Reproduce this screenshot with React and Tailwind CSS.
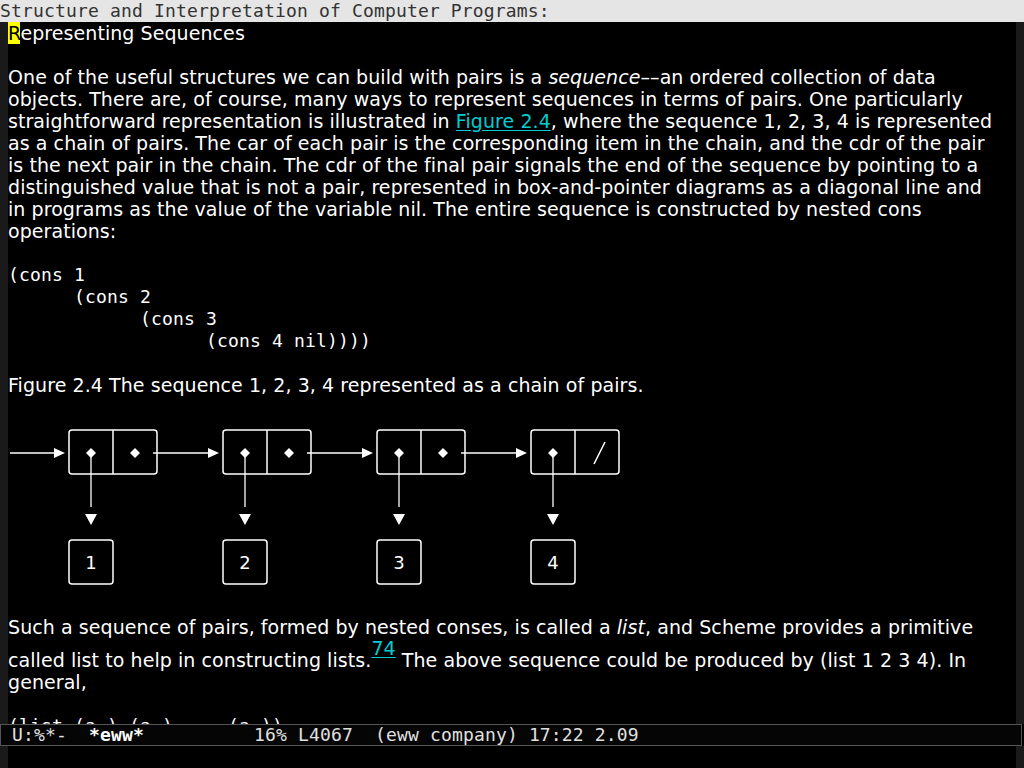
import React from "react";

const sans = { fontFamily: '"DejaVu Sans", "Liberation Sans", sans-serif' };

function Pair({ x, last }) {
  return (
    <g>
      <rect x={x} y={33} width={88} height={44} rx={3} fill="none" stroke="#fff" strokeWidth={1.5} />
      <line x1={x + 44} y1={33} x2={x + 44} y2={77} stroke="#fff" strokeWidth={1.5} />
      <polygon points={`${x + 22},51 ${x + 27},56 ${x + 22},61 ${x + 17},56`} fill="#fff" />
      {last ? (
        <line x1={x + 63} y1={67} x2={x + 74} y2={45} stroke="#fff" strokeWidth={1.5} />
      ) : (
        <polygon points={`${x + 66},51 ${x + 71},56 ${x + 66},61 ${x + 61},56`} fill="#fff" />
      )}
      <line x1={x + 22} y1={56} x2={x + 22} y2={110} stroke="#fff" strokeWidth={1.3} />
      <polygon points={`${x + 16},117 ${x + 28},117 ${x + 22},128`} fill="#fff" />
      <rect x={x} y={143} width={44} height={44} rx={3} fill="none" stroke="#fff" strokeWidth={1.5} />
    </g>
  );
}

function Arrow({ x1, x2 }) {
  return (
    <g>
      <line x1={x1} y1={56} x2={x2 - 10} y2={56} stroke="#fff" strokeWidth={1.3} />
      <polygon points={`${x2 - 11},51 ${x2},56 ${x2 - 11},61`} fill="#fff" />
    </g>
  );
}

function Diagram() {
  const xs = [60, 214, 368, 522];
  return (
    <svg width="700" height="220" viewBox="-1 -1 700 220" className="block">
      <Arrow x1={1} x2={56} />
      {xs.slice(0, 3).map((x) => (
        <Arrow key={x} x1={x + 84} x2={x + 150} />
      ))}
      {xs.map((x, i) => (
        <Pair key={x} x={x} last={i === 3} />
      ))}
      {xs.map((x, i) => (
        <text
          key={"t" + x}
          x={x + 22}
          y={172}
          textAnchor="middle"
          fill="#fff"
          fontSize="18"
          fontFamily='"DejaVu Sans", sans-serif'
        >
          {i + 1}
        </text>
      ))}
    </svg>
  );
}

const L = ({ children }) => <div className="h-[22px] leading-[22px] whitespace-pre">{children}</div>;
const Mono = ({ children }) => (
  <div className="h-[22px] leading-[22px] whitespace-pre font-['DejaVu_Sans_Mono',monospace] text-[18px] tracking-[0.16px]">
    {children}
  </div>
);
const Link = ({ children }) => <span className="text-[#00cdd0] underline underline-offset-2">{children}</span>;

export default function App() {
  return (
    <div className="w-[1024px] h-[768px] bg-black flex flex-col overflow-hidden">
      <div className="h-[22px] shrink-0 bg-[#e5e5e5] text-[#333333] leading-[22px] text-[18px] tracking-[0.16px] whitespace-pre font-['DejaVu_Sans_Mono',monospace]">
        Structure and Interpretation of Computer Programs:
      </div>
      <div className="flex flex-1 min-h-0">
        <div className="w-[8px] bg-[#1a1a1a] shrink-0" />
        <div className="flex-1 min-w-0 overflow-hidden text-white text-[19px] tracking-[0.07px]" style={sans}>
          <L>
            <span className="bg-[#ffff00] text-black">R</span>epresenting Sequences
          </L>
          <L> </L>
          <L>
            One of the useful structures we can build with pairs is a <i>sequence</i>––an ordered collection of data
          </L>
          <L>objects. There are, of course, many ways to represent sequences in terms of pairs. One particularly</L>
          <L>
            straightforward representation is illustrated in <Link>Figure 2.4</Link>, where the sequence 1, 2, 3, 4 is represented
          </L>
          <L>as a chain of pairs. The car of each pair is the corresponding item in the chain, and the cdr of the pair</L>
          <L>is the next pair in the chain. The cdr of the final pair signals the end of the sequence by pointing to a</L>
          <L>distinguished value that is not a pair, represented in box-and-pointer diagrams as a diagonal line and</L>
          <L>in programs as the value of the variable nil. The entire sequence is constructed by nested cons</L>
          <L>operations:</L>
          <L> </L>
          <Mono>(cons 1</Mono>
          <Mono>      (cons 2</Mono>
          <Mono>            (cons 3</Mono>
          <Mono>                  (cons 4 nil))))</Mono>
          <L> </L>
          <L>Figure 2.4 The sequence 1, 2, 3, 4 represented as a chain of pairs.</L>
          <Diagram />
          <L>
            Such a sequence of pairs, formed by nested conses, is called a <i>list</i>, and Scheme provides a primitive
          </L>
          <div className="h-[33px] pt-[11px] leading-[22px] whitespace-pre">
            called list to help in constructing lists.
            <span className="relative top-[-12px] text-[#00cdd0] underline underline-offset-2">74</span> The above sequence could be produced by (list 1 2 3 4). In
          </div>
          <L>general,</L>
          <L> </L>
          <Mono>(list (a₁) (a₂) ... (aₙ))</Mono>
        </div>
        <div className="w-[8px] bg-[#1a1a1a] shrink-0" />
      </div>
      <div className="h-[22px] w-[1022px] shrink-0 border border-[#555555] bg-[#050505] text-[#e0e0e0] leading-[20px] text-[18px] tracking-[0.16px] whitespace-pre font-['DejaVu_Sans_Mono',monospace]">
        {" U:%*-  "}
        <span className="font-bold text-white">*eww*</span>
        {"          16% L4067  (eww company) 17:22 2.09"}
      </div>
      <div className="h-[22px] shrink-0 flex">
        <div className="w-[8px] bg-[#1a1a1a]" />
        <div className="flex-1 bg-black" />
        <div className="w-[8px] bg-[#1a1a1a]" />
      </div>
    </div>
  );
}
